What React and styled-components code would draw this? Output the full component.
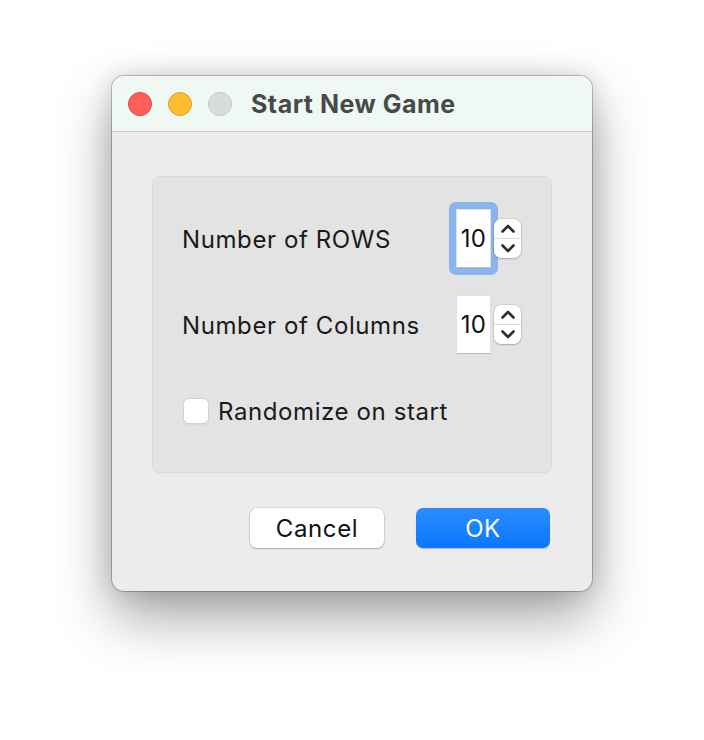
import React, { useState } from 'react'
import styled, { createGlobalStyle } from 'styled-components'

const GlobalStyle = createGlobalStyle`
  html, body {
    margin: 0;
    padding: 0;
    background: #ffffff;
  }
  body {
    font-family: Inter, "Noto Sans", sans-serif;
    -webkit-font-smoothing: antialiased;
  }
`

function Stepper() {
  return (
    <StepperBox>
      <StepButton>
        <svg width="16" height="11" viewBox="0 0 16 11">
          <path d="M2.5 8.5 L8 3 L13.5 8.5" fill="none" stroke="#2e2e2e" strokeWidth="2.6" strokeLinecap="round" strokeLinejoin="round" />
        </svg>
      </StepButton>
      <StepButton>
        <svg width="16" height="11" viewBox="0 0 16 11">
          <path d="M2.5 2.5 L8 8 L13.5 2.5" fill="none" stroke="#2e2e2e" strokeWidth="2.6" strokeLinecap="round" strokeLinejoin="round" />
        </svg>
      </StepButton>
    </StepperBox>
  )
}

function NumberRow({ label, value, focused }) {
  return (
    <Row>
      <Label>{label}</Label>
      <FieldRing $focused={focused}>
        <Field>{value}</Field>
      </FieldRing>
      <Stepper />
    </Row>
  )
}

export default function App() {
  const [randomize, setRandomize] = useState(false)

  return (
    <>
      <GlobalStyle />
      <Page>
        <Window>
          <TitleBar>
            <Lights>
              <Light $color="#ff5f57" $border="#e0443e" />
              <Light $color="#febc2e" $border="#dea123" />
              <Light $color="#d8ddd9" $border="#c3c8c4" />
            </Lights>
            <Title>Start New Game</Title>
          </TitleBar>
          <Body>
            <Group>
              <NumberRow label="Number of ROWS" value="10" focused />
              <NumberRow label="Number of Columns" value="10" />
              <Row>
                <CheckLabel onClick={() => setRandomize(!randomize)}>
                  <CheckBox $checked={randomize} />
                  Randomize on start
                </CheckLabel>
              </Row>
            </Group>
            <Buttons>
              <Button>Cancel</Button>
              <Button $primary>OK</Button>
            </Buttons>
          </Body>
        </Window>
      </Page>
    </>
  )
}

const Page = styled.div`
  width: 704px;
  height: 740px;
  padding: 76px 0 0 112px;
  box-sizing: border-box;
  overflow: hidden;
`

const Window = styled.div`
  width: 480px;
  height: 515px;
  border-radius: 12px;
  overflow: hidden;
  background: #ececec;
  box-shadow: 0 0 0 1px rgba(0, 0, 0, 0.24), 0 26px 55px rgba(0, 0, 0, 0.36),
    0 0 26px rgba(0, 0, 0, 0.14);
  display: flex;
  flex-direction: column;
`

const TitleBar = styled.div`
  height: 55px;
  flex-shrink: 0;
  background: #eff8f3;
  border-bottom: 1px solid #c9cdcb;
  display: flex;
  align-items: center;
  padding-left: 16px;
`

const Lights = styled.div`
  display: flex;
  gap: 16px;
`

const Light = styled.span`
  width: 22px;
  height: 22px;
  border-radius: 50%;
  background: ${(p) => p.$color};
  border: 1px solid ${(p) => p.$border};
`

const Title = styled.div`
  margin-left: 19px;
  font-size: 25px;
  font-weight: 700;
  color: #464a48;
  letter-spacing: 0.5px;
`

const Body = styled.div`
  flex: 1;
  padding: 44px 40px 0 40px;
  display: flex;
  flex-direction: column;
`

const Group = styled.div`
  height: 297px;
  box-sizing: border-box;
  background: #e3e3e3;
  border: 1px solid #dadada;
  border-radius: 7px;
  padding: 19px 30px 19px 29px;
  display: flex;
  flex-direction: column;
`

const Row = styled.div`
  height: 86px;
  display: flex;
  align-items: center;
`

const Label = styled.div`
  flex: 1;
  font-size: 24px;
  letter-spacing: 0.6px;
  color: #1a1a1a;
  padding-top: 2px;
`

const FieldRing = styled.div`
  padding: 7px;
  margin-right: -4px;
  border-radius: 7px;
  background: ${(p) => (p.$focused ? '#8ab4ed' : 'transparent')};
  display: flex;
`

const Field = styled.div`
  width: 35px;
  height: 59px;
  box-sizing: border-box;
  background: #ffffff;
  border: 1px solid #e0e0e0;
  border-bottom-color: #b9b9b9;
  display: flex;
  align-items: center;
  justify-content: center;
  font-size: 24px;
  letter-spacing: 0.4px;
  color: #111;
`

const StepperBox = styled.div`
  width: 27px;
  height: 39px;
  border-radius: 7px;
  background: #ffffff;
  box-shadow: 0 0 0 0.5px rgba(0, 0, 0, 0.15), 0 1px 2px rgba(0, 0, 0, 0.2);
  display: flex;
  flex-direction: column;
  overflow: hidden;
`

const StepButton = styled.div`
  flex: 1;
  display: flex;
  align-items: center;
  justify-content: center;
  &:first-child {
    border-bottom: 1px solid #dcdcdc;
  }
`

const CheckLabel = styled.label`
  display: flex;
  align-items: center;
  gap: 9px;
  font-size: 24px;
  letter-spacing: 0.6px;
  color: #1a1a1a;
  cursor: pointer;
  margin-left: 1px;
  padding-top: 2px;
`

const CheckBox = styled.span`
  width: 26px;
  height: 26px;
  box-sizing: border-box;
  border-radius: 6px;
  background: ${(p) => (p.$checked ? '#0a7aff' : '#ffffff')};
  border: 1px solid #d2d2d2;
  box-shadow: 0 1px 1px rgba(0, 0, 0, 0.06);
`

const Buttons = styled.div`
  margin-top: 35px;
  display: flex;
  justify-content: flex-end;
  gap: 32px;
  padding-right: 2px;
`

const Button = styled.button`
  width: 134px;
  height: 40px;
  border-radius: 7px;
  font-family: Inter, "Noto Sans", sans-serif;
  font-size: 24px;
  letter-spacing: 0.6px;
  border: none;
  cursor: pointer;
  color: ${(p) => (p.$primary ? '#ffffff' : '#111111')};
  background: ${(p) =>
    p.$primary ? 'linear-gradient(#2b8cff, #0a78ff)' : '#ffffff'};
  box-shadow: ${(p) =>
    p.$primary
      ? '0 0.5px 1px rgba(0, 0, 0, 0.2)'
      : '0 0 0 0.5px rgba(0, 0, 0, 0.15), 0 1px 2px rgba(0, 0, 0, 0.22)'};
`
